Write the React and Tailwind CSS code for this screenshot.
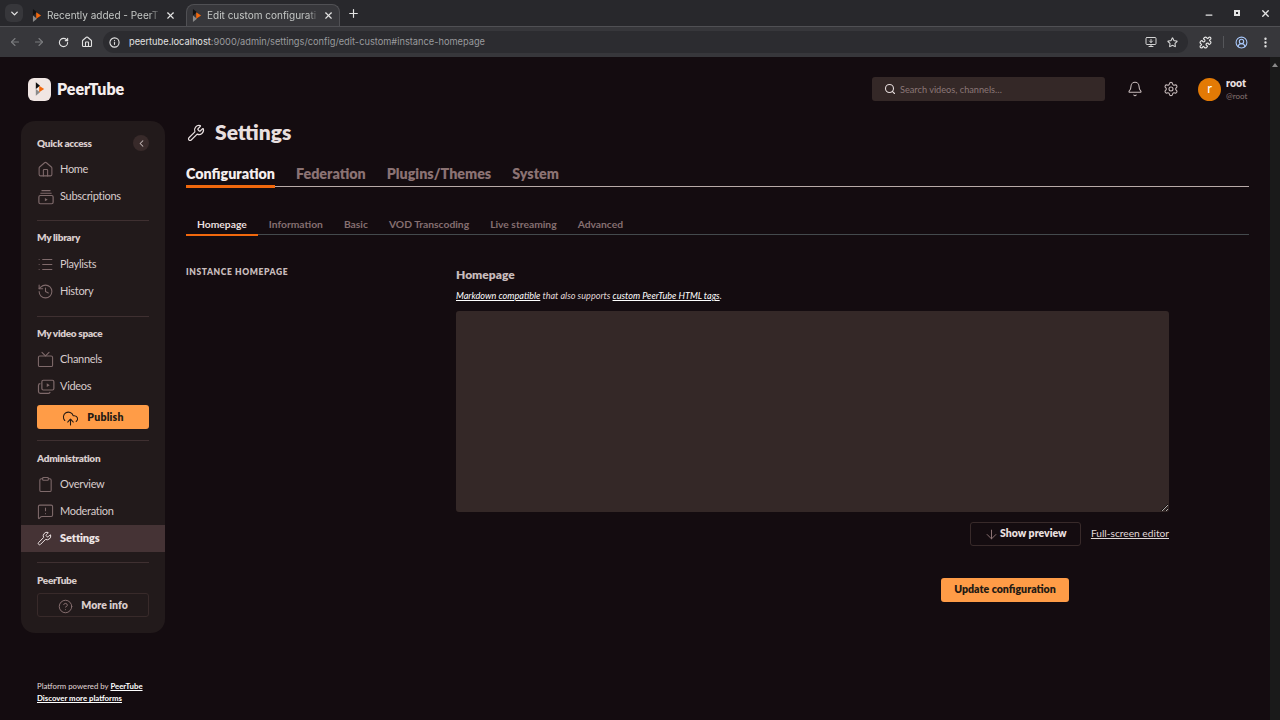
import React from "react";
import {
  ArrowDown,
  ArrowLeft,
  ArrowRight,
  Bell,
  ChevronDown,
  ChevronLeft,
  CircleHelp,
  CircleUserRound,
  Clipboard,
  CloudUpload,
  History,
  Home,
  Info,
  List,
  MessageSquareWarning,
  Minus,
  MonitorDown,
  MoreVertical,
  Plus,
  Puzzle,
  RotateCw,
  Search,
  Settings,
  Star,
  Tv,
  Wrench,
  X,
} from "lucide-react";

const PeerTubeMark = ({ className }) => (
  <svg viewBox="0 0 12 16" className={className} aria-hidden="true">
    <path d="M1 0v8l5-4z" fill="#111" />
    <path d="M1 8v8l5-4z" fill="#8a8a8a" />
    <path d="M5 4v8l6-4z" fill="#f1680d" />
  </svg>
);

const SubscriptionsIcon = () => (
  <svg viewBox="0 0 24 24" className="w-[18px] h-[18px]" fill="none" stroke="currentColor" strokeWidth="1.6" aria-hidden="true">
    <path d="M6 3.5h12M4.5 7h15" />
    <rect x="2.5" y="10" width="19" height="11" rx="2" />
    <path d="M10.5 13.2v4.6l3.8-2.3z" fill="currentColor" stroke="none" />
  </svg>
);

const VideosIcon = () => (
  <svg viewBox="0 0 24 24" className="w-[18px] h-[18px]" fill="none" stroke="currentColor" strokeWidth="1.6" aria-hidden="true">
    <rect x="6.5" y="3" width="16" height="13" rx="2" />
    <path d="M4.5 7.5A2.5 2.5 0 0 0 2 10v8a2.5 2.5 0 0 0 2.5 2.5H15a2.5 2.5 0 0 0 2.5-2" />
    <path d="M13 7v5l4-2.5z" fill="currentColor" stroke="none" />
  </svg>
);

const BrowserTab = ({ title, active }) => (
  <div
    className={`flex items-center h-[22px] pl-[4px] pr-[5px] w-[154px] rounded-t-lg ${
      active ? "bg-[#37373b] border border-b-0 border-[#505054]" : ""
    }`}
  >
    <PeerTubeMark className="w-[10px] h-[13px] ml-[1px] shrink-0" />
    <span className="ml-[5px] flex-1 whitespace-nowrap text-[10px] text-[#c4c7c5] [font-family:Inter,sans-serif] [mask-image:linear-gradient(to_right,black_90%,transparent)]">
      {title}
    </span>
    <X size={11} strokeWidth={2.5} className="ml-1 text-[#e3e3e3] shrink-0" />
  </div>
);

const SideLink = ({ icon, label, active }) => (
  <div
    className={`flex items-center h-[27px] pl-4 text-[11px] ${
      active ? "bg-[#453335] font-extrabold tracking-[-0.1px] text-[#eee5e5]" : "tracking-[-0.3px] text-[#d8cccc]"
    }`}
  >
    <span className={`w-[23px] flex items-center ${active ? "text-[#eee5e5]" : "text-[#7f6a6b]"}`}>{icon}</span>
    {label}
  </div>
);

const SideHeading = ({ children }) => (
  <div className="px-4 text-[10px] font-extrabold tracking-[-0.3px] text-[#d8cccc] leading-[14px]">{children}</div>
);

const Divider = () => <div className="mx-4 h-px bg-[#3f3031]" />;

const mainTabs = ["Federation", "Plugins/Themes", "System"];
const subTabs = ["Information", "Basic", "VOD Transcoding", "Live streaming", "Advanced"];

const App = () => {
  return (
    <div className="h-[720px] flex flex-col overflow-hidden bg-[#140c10] [font-family:Lato,sans-serif]">
      {/* browser chrome */}
      <div className="h-[26px] bg-[#28282c] flex items-end shrink-0">
        <div className="ml-[5px] mb-[4px] w-[18px] h-[18px] rounded-md bg-[#37373b] flex items-center justify-center">
          <ChevronDown size={11} strokeWidth={3} className="text-[#e3e3e3]" />
        </div>
        <div className="ml-[4px]">
          <BrowserTab title="Recently added - PeerT" />
        </div>
        <div className="ml-[5px]">
          <BrowserTab title="Edit custom configurati" active />
        </div>
        <Plus size={13} strokeWidth={2.2} className="ml-[7px] mb-[6px] text-[#e3e3e3]" />
        <div className="ml-auto flex items-center gap-[19px] pr-[9px] mb-[6px] text-[#e3e3e3]">
          <Minus size={10} strokeWidth={3} className="mt-1" />
          <div className="w-[6px] h-[6px] border-2 border-[#e3e3e3] mx-[1px]" />
          <X size={11} strokeWidth={3} />
        </div>
      </div>
      <div className="h-[31px] bg-[#37373b] flex items-center shrink-0 border-t border-[#505054] text-[#c7c7c7]">
        <ArrowLeft size={12} strokeWidth={2.2} className="ml-[9px] text-[#7b7c7f]" />
        <ArrowRight size={12} strokeWidth={2.2} className="ml-[12px] text-[#7b7c7f]" />
        <RotateCw size={11} strokeWidth={2.4} className="ml-[13px] text-[#e3e3e3]" />
        <Home size={12} strokeWidth={2.2} className="ml-[12px] text-[#e3e3e3]" />
        <div className="ml-[10px] w-[1085px] h-[22px] rounded-full bg-[#2c2c30] flex items-center pl-[6px] pr-[10px]">
          <Info size={11} strokeWidth={2.4} className="text-[#e3e3e3]" />
          <span className="ml-[9px] text-[9.25px] [font-family:Inter,sans-serif] text-[#e3e3e3]">
            peertube.localhost<span className="text-[#9a9b9e]">:9000/admin/settings/config/edit-custom#instance-homepage</span>
          </span>
          <MonitorDown size={12} strokeWidth={2} className="ml-auto text-[#d5d5d5]" />
          <Star size={11} strokeWidth={2.4} className="ml-[10px] text-[#d5d5d5]" />
        </div>
        <Puzzle size={13} strokeWidth={2.2} className="ml-[11px] text-[#e3e3e3]" />
        <div className="ml-[11px] w-px h-[12px] bg-[#55565a]" />
        <CircleUserRound size={13} strokeWidth={2} className="ml-[11px] text-[#a8c7fa]" />
        <MoreVertical size={13} strokeWidth={2.4} className="ml-[11px] text-[#e3e3e3]" />
      </div>

      {/* page */}
      <div className="flex-1 flex min-h-0">
        <div className="flex-1 flex flex-col min-w-0">
          {/* top bar */}
          <header className="h-[64px] shrink-0 flex items-center pl-7 pr-[16px]">
            <div className="w-[23px] h-[23px] rounded-md bg-[#f0e6e3] flex items-center justify-center">
              <PeerTubeMark className="w-[10px] h-[14px]" />
            </div>
            <span className="ml-[6px] text-[16px] font-extrabold text-[#f5eeee]">PeerTube</span>
            <div className="ml-auto w-[233px] h-[24px] rounded-[3px] bg-[#342827] flex items-center pl-[12px]">
              <Search size={12} strokeWidth={2.2} className="text-[#e6dddd]" />
              <span className="ml-[4px] pt-px text-[9.2px] text-[#8b7777]">Search videos, channels…</span>
            </div>
            <Bell size={16} strokeWidth={1.6} className="ml-[22px] text-[#c8bcbc]" />
            <Settings size={16} strokeWidth={1.6} className="ml-[20px] text-[#c8bcbc]" />
            <div className="ml-[19px] w-[23px] h-[23px] rounded-full bg-[#e37a05] flex items-center justify-center text-[13px] text-white">
              r
            </div>
            <div className="ml-[5px] w-[28px]">
              <div className="mt-[1px] text-[10.5px] font-extrabold leading-[13px] text-[#e8dfdf]">root</div>
              <div className="text-[8px] leading-[12px] text-[#8b7777]">@root</div>
            </div>
          </header>

          <div className="flex-1 flex min-h-0">
            {/* sidebar */}
            <div className="w-[165px] shrink-0 pl-[21px] flex flex-col">
              <nav className="w-[144px] h-[512px] rounded-[14px] bg-[#221a1b] pt-[14px]">
                <div className="flex items-center justify-between pr-4">
                  <SideHeading>Quick access</SideHeading>
                  <div className="w-4 h-4 rounded-full bg-[#382a2a] flex items-center justify-center">
                    <ChevronLeft size={11} strokeWidth={2.2} className="text-[#c8bcbc]" />
                  </div>
                </div>
                <div className="mt-[5px]">
                  <SideLink icon={<Home size={17} strokeWidth={1.5} />} label="Home" />
                  <SideLink icon={<SubscriptionsIcon />} label="Subscriptions" />
                </div>
                <div className="mt-[10px]"><Divider /></div>
                <div className="mt-[9px]"><SideHeading>My library</SideHeading></div>
                <div className="mt-[7px]">
                  <SideLink icon={<List size={17} strokeWidth={1.5} />} label="Playlists" />
                  <SideLink icon={<History size={17} strokeWidth={1.5} />} label="History" />
                </div>
                <div className="mt-[11px]"><Divider /></div>
                <div className="mt-[9px]"><SideHeading>My video space</SideHeading></div>
                <div className="mt-[6px]">
                  <SideLink icon={<Tv size={17} strokeWidth={1.5} />} label="Channels" />
                  <SideLink icon={<VideosIcon />} label="Videos" />
                </div>
                <div className="mx-4 mt-[5px] h-[24px] pt-[2px] rounded-[3px] bg-[#ff9c47] flex items-center justify-center text-[10.5px] font-extrabold tracking-[0.2px] text-[#241a14]">
                  <CloudUpload size={17} strokeWidth={1.5} className="mr-2" />
                  Publish
                </div>
                <div className="mt-[11px]"><Divider /></div>
                <div className="mt-[10px]"><SideHeading>Administration</SideHeading></div>
                <div className="mt-[6px]">
                  <SideLink icon={<Clipboard size={17} strokeWidth={1.5} />} label="Overview" />
                  <SideLink icon={<MessageSquareWarning size={17} strokeWidth={1.5} />} label="Moderation" />
                  <SideLink icon={<Wrench size={15} strokeWidth={1.6} />} label="Settings" active />
                </div>
                <div className="mt-[10px]"><Divider /></div>
                <div className="mt-[10px]"><SideHeading>PeerTube</SideHeading></div>
                <div className="mx-4 mt-[6px] h-[24px] pt-[2px] rounded-[3px] border border-[#382a2a] flex items-center justify-center text-[10.5px] font-extrabold text-[#d8cccc]">
                  <CircleHelp size={15} strokeWidth={1.5} className="mr-2 text-[#8b7273]" />
                  More info
                </div>
              </nav>
              <div className="mt-[47px] pl-4 text-[7.8px] leading-[12px] text-[#e0d8d8]">
                <div>
                  Platform powered by <span className="font-bold underline text-white">PeerTube</span>
                </div>
                <div className="font-bold underline text-white">Discover more platforms</div>
              </div>
            </div>

            {/* main */}
            <main className="flex-1 min-w-0 pl-[21px] pr-[21px]">
              <div className="flex items-center h-[24px]">
                <Wrench size={18} strokeWidth={1.6} className="ml-[1px] text-[#e8dfdf]" />
                <h1 className="ml-[10px] pb-[2px] text-[21px] font-extrabold text-[#e8dfdf]">Settings</h1>
              </div>
              <div className="mt-[17px] flex h-[25px] border-b border-[#b8aaa8] items-start">
                <div className="h-[26px] border-b-[3px] border-[#f1680d] text-[14.3px] font-extrabold leading-[24px] text-[#f5eeee]">
                  Configuration
                </div>
                {mainTabs.map((tab) => (
                  <div key={tab} className="ml-[21px] text-[14.3px] font-extrabold leading-[24px] text-[#8b7273]">
                    {tab}
                  </div>
                ))}
              </div>
              <div className="mt-[28px] flex h-[20px] border-b border-[#444a4d] items-start">
                <div className="h-[21px] px-[11px] border-b-2 border-[#f1680d] text-[10.3px] font-bold leading-[18px] text-[#e8dfdf]">
                  Homepage
                </div>
                {subTabs.map((tab, index) => (
                  <div
                    key={tab}
                    className={`${index === 0 ? "ml-[11px]" : "ml-[21px]"} text-[10.3px] font-bold leading-[18px] text-[#856f70]`}
                  >
                    {tab}
                  </div>
                ))}
              </div>
              <div className="mt-[30px] flex">
                <div className="w-[270px] shrink-0 text-[8.5px] font-extrabold tracking-[0.6px] text-[#c8bcbc] leading-[14px]">
                  INSTANCE HOMEPAGE
                </div>
                <div className="w-[713px]">
                  <div className="mt-[2px] text-[12px] font-extrabold leading-[16px] text-[#c8bcbc]">Homepage</div>
                  <p className="mt-[6px] text-[9.1px] italic leading-[14px] text-[#e0d8d8]">
                    <span className="underline text-white">Markdown compatible</span> that also supports{" "}
                    <span className="underline text-white">custom PeerTube HTML tags</span>.
                  </p>
                  <textarea className="mt-[8px] block w-[713px] h-[201px] rounded-[3px] bg-[#342827] outline-none" />
                  <div className="mt-[10px] flex items-center justify-end">
                    <div className="w-[111px] h-[24px] rounded-[3px] border border-[#382a2a] flex items-center justify-center text-[10.5px] font-extrabold text-[#e8dfdf]">
                      <ArrowDown size={15} strokeWidth={1.6} className="mr-[1px] text-[#8b7273]" />
                      Show preview
                    </div>
                    <span className="ml-[10px] text-[10.2px] underline text-[#e0d8d8]">Full-screen editor</span>
                  </div>
                  <div className="mt-[32px] ml-[485px] w-[128px] h-[24px] rounded-[3px] bg-[#ff9c47] flex items-center justify-center text-[10.6px] font-extrabold text-[#241a14]">
                    Update configuration
                  </div>
                </div>
              </div>
            </main>
          </div>
        </div>
        {/* scrollbar */}
        <div className="w-[10px] shrink-0 bg-[#1a1a1a] flex justify-center pt-[6px]">
          <div className="w-0 h-0 border-x-[3px] border-x-transparent border-b-[4px] border-b-[#8a8a8a]" />
        </div>
      </div>
    </div>
  );
};

export default App;
